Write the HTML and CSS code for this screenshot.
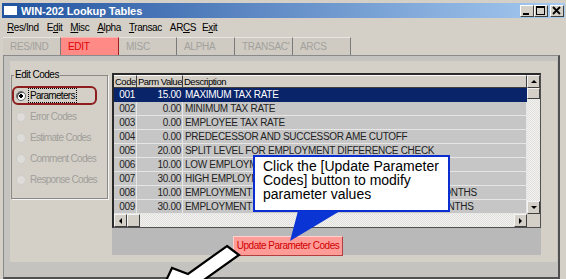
FILE: index.html
```html
<!DOCTYPE html>
<html lang="en">
<head>
    <meta charset="UTF-8">
    <title>WIN-202 Lookup Tables</title>
    <link rel="stylesheet" href="styles.css">
</head>
<body>
<div class="win">
    <!-- title bar -->
    <div class="titlebar">
        <span class="ticon"></span>
        <span class="ttext">WIN-202 Lookup Tables</span>
        <div class="tbtns">
            <span class="tb"><svg width="12" height="10" viewBox="0 0 12 10"><rect x="2" y="7" width="6" height="2" fill="#000"/></svg></span>
            <span class="tb"><svg width="12" height="10" viewBox="0 0 12 10"><rect x="1.5" y="0.5" width="8" height="8" fill="none" stroke="#000"/><rect x="1" y="0" width="9" height="2" fill="#000"/></svg></span>
            <span class="tb close"><svg width="12" height="10" viewBox="0 0 12 10"><path d="M2 1 L9 8 M9 1 L2 8" stroke="#000" stroke-width="1.8"/></svg></span>
        </div>
    </div>

    <!-- menu -->
    <div class="menubar">
        <span><u>R</u>es/Ind</span>
        <span>E<u>d</u>it</span>
        <span><u>M</u>isc</span>
        <span><u>A</u>lpha</span>
        <span><u>T</u>ransac</span>
        <span class="arcs">AR<u>C</u>S</span>
        <span>E<u>x</u>it</span>
    </div>

    <!-- tabs -->
    <div class="tabs">
        <div class="tab">RES/IND</div>
        <div class="tab active">EDIT</div>
        <div class="tab">MISC</div>
        <div class="tab">ALPHA</div>
        <div class="tab">TRANSAC'</div>
        <div class="tab">ARCS</div>
    </div>

    <div class="page">
        <div class="pane">
            <fieldset class="group">
                <legend>Edit Codes</legend>
                <div class="opt checked"><span class="radio"></span><span class="lbl focus">Parameters</span><span class="hl"></span></div>
                <div class="opt"><span class="radio"></span><span class="lbl">Error Codes</span></div>
                <div class="opt"><span class="radio"></span><span class="lbl">Estimate Codes</span></div>
                <div class="opt"><span class="radio"></span><span class="lbl">Comment Codes</span></div>
                <div class="opt"><span class="radio"></span><span class="lbl">Response Codes</span></div>
            </fieldset>

            <div class="gridarea">
                <div class="grid">
                    <div class="rows">
                        <div class="row head"><span>Code</span><span>Parm Value</span><span>Description</span></div>
                        <div class="row sel"><span>001</span><span>15.00</span><span>MAXIMUM TAX RATE</span></div>
                        <div class="row"><span>002</span><span>0.00</span><span>MINIMUM TAX RATE</span></div>
                        <div class="row"><span>003</span><span>0.00</span><span>EMPLOYEE TAX RATE</span></div>
                        <div class="row"><span>004</span><span>0.00</span><span>PREDECESSOR AND SUCCESSOR AME CUTOFF</span></div>
                        <div class="row"><span>005</span><span>20.00</span><span>SPLIT LEVEL FOR EMPLOYMENT DIFFERENCE CHECK</span></div>
                        <div class="row"><span>006</span><span>10.00</span><span>LOW EMPLOYMENT LEVEL PERCENT</span></div>
                        <div class="row"><span>007</span><span>30.00</span><span>HIGH EMPLOYMENT LEVEL PERCENT</span></div>
                        <div class="row"><span>008</span><span>10.00</span><span>EMPLOYMENT FOR SEASONAL VARIANCES CHECK IN MONTHS</span></div>
                        <div class="row"><span>009</span><span>30.00</span><span>EMPLOYMENT FOR SEASONAL VARIANCE PERIOD IN MONTHS</span></div>
                    </div>
                    <div class="vscroll">
                        <span class="sb up"></span>
                        <span class="thumb"></span>
                        <span class="track"></span>
                        <span class="sb down"></span>
                    </div>
                    <div class="hscroll">
                        <span class="sb left"></span>
                        <span class="thumb"></span>
                        <span class="track"></span>
                        <span class="sb right"></span>
                    </div>
                    <div class="corner"></div>
                </div>
                <div class="btnrow">
                    <button type="button">Update Parameter Codes</button>
                </div>
            </div>
        </div>
    </div>

    <!-- annotation overlays -->
    <div class="callout">Click the [Update Parameter Codes] button to modify parameter values</div>
    <svg class="tail" width="60" height="32" viewBox="0 0 60 32">
        <polygon points="10,0 52,0 2,30" fill="#0a35d4"/>
    </svg>
    <svg class="arrow" width="110" height="60" viewBox="150 240 110 60">
        <polygon points="227,246 239,255 201,282 209,292 156,302 172,268 188,274" fill="#fff" stroke="#000" stroke-width="2.2" stroke-linejoin="miter"/>
    </svg>
</div>
</body>
</html>
```

FILE: styles.css
```css
body {
    margin: 0;
    font-family: "Liberation Sans", Arial, sans-serif;
}
.win {
    position: relative;
    width: 566px;
    height: 279px;
    overflow: hidden;
    background: #d4d0c8;
}

/* title bar */
.titlebar {
    display: flex;
    align-items: center;
    height: 15px;
    margin: 3px 1px 0 2px;
    background: linear-gradient(to right, #22539f, #a6caf0);
    color: #fff;
}
.ticon {
    width: 13px;
    height: 9px;
    margin-left: 2px;
    background: #fff;
}
.ttext {
    margin-left: 4px;
    font-size: 11px;
    font-weight: bold;
    letter-spacing: -0.1px;
}
.tbtns {
    display: flex;
    margin-left: auto;
    margin-right: 1px;
}
.tb {
    display: flex;
    align-items: center;
    justify-content: center;
    width: 12px;
    height: 10px;
    background: #d4d0c8;
    border-top: 1px solid #fff;
    border-left: 1px solid #fff;
    border-right: 1px solid #404040;
    border-bottom: 1px solid #404040;
}
.tb.close {
    margin-left: 2px;
}

/* menu */
.menubar {
    display: flex;
    align-items: center;
    height: 18px;
    padding-left: 7px;
    font-size: 10px;
    letter-spacing: -0.4px;
    color: #000;
}
.menubar span {
    margin-right: 8px;
}
.menubar .arcs {
    margin-right: 6px;
}

/* tabs */
.tabs {
    display: flex;
    height: 18px;
    margin-top: 1px;
    padding-left: 3px;
}
.tab {
    box-sizing: border-box;
    width: 58px;
    padding-left: 7px;
    line-height: 18px;
    font-size: 10px;
    letter-spacing: -0.3px;
    color: #a3a19c;
    background: #cfcbc3;
    border-top: 1px solid #e8e6e2;
    border-right: 1px solid #7a7a7a;
}
.tab.active {
    background: #ff8a86;
    color: #e00000;
    border-right: 1px solid #a02020;
    border-top: 1px solid #ffb0b0;
}

/* tab page */
.page {
    box-sizing: border-box;
    width: 557px;
    height: 224px;
    margin-left: 3px;
    padding: 5px 1px 0 6px;
    background: #c5c3bf;
    border-top: 1px solid #8a8a8a;
    border-left: 1px solid #8a8a8a;
    border-right: 2px solid #505050;
    border-bottom: 2px solid #505050;
}
.pane {
    display: flex;
    height: 201px;
    box-sizing: border-box;
    padding-top: 12px;
    background: #d4d0c8;
}

/* group box */
.group {
    box-sizing: border-box;
    width: 97px;
    height: 130px;
    margin: -4px 4px 0 1px;
    padding: 4px 0 0 0;
    border: 1px solid #8c8a86;
    box-shadow: 1px 1px 0 #f4f4f4;
    font-size: 10px;
    letter-spacing: -0.7px;
}
.group legend {
    padding: 0 1px;
    margin-left: 2px;
    line-height: 12px;
    letter-spacing: -0.5px;
    color: #000;
}
.opt {
    position: relative;
    display: flex;
    align-items: center;
    height: 21px;
    padding-left: 4px;
    white-space: nowrap;
    color: #a09e9a;
}
.opt.checked {
    color: #000;
}
.radio {
    box-sizing: border-box;
    flex: none;
    width: 10px;
    height: 10px;
    margin-right: 3px;
    border-radius: 50%;
    background: #dedcd8;
    border: 1px solid #cfcdc8;
}
.checked .radio {
    background: radial-gradient(circle, #000 0 1.6px, #fff 2px);
    border: 1px solid #6a6a6a;
    box-shadow: inset 1px 1px 0 #404040;
}
.lbl {
    padding: 0 1px;
    line-height: 13px;
}
.lbl.focus {
    outline: 1px dotted #000;
}
.hl {
    position: absolute;
    left: 0;
    top: 1px;
    width: 81px;
    height: 15px;
    border: 2px solid #8e1d1d;
    border-radius: 6px;
}

/* grid */
.gridarea {
    width: 429px;
    height: 182px;
    background: #b9b9b9;
}
.grid {
    box-sizing: border-box;
    display: grid;
    grid-template-columns: 1fr 13px;
    grid-template-rows: 1fr 13px;
    height: 155px;
    border-top: 2px solid #2a2a2a;
    border-left: 2px solid #2a2a2a;
    border-right: 1px solid #505050;
    border-bottom: 1px solid #505050;
    font-size: 10px;
    letter-spacing: -0.3px;
}
.rows {
    overflow: hidden;
    background: #c6c6c6;
}
.row {
    display: grid;
    grid-template-columns: 23px 46px 1fr;
    height: 14px;
    color: #222;
}
.row span {
    box-sizing: border-box;
    padding: 0 1px 0 2px;
    line-height: 13px;
    white-space: nowrap;
    overflow: hidden;
    border-right: 1px solid #e6e6e6;
    border-bottom: 1px solid #e6e6e6;
}
.row span:nth-child(1),
.row span:nth-child(2) {
    text-align: right;
}
.row.head {
    height: 13px;
    background: #d4d0c8;
    color: #000;
    font-size: 9.5px;
    letter-spacing: -0.5px;
}
.row.head span {
    line-height: 11px;
    text-align: left;
    padding-left: 1px;
    padding-right: 0;
    border-right: 1px solid #404040;
    border-bottom: 1px solid #404040;
    border-top: 1px solid #fff;
}
.row.sel {
    background: #0a246a;
    color: #fff;
}
.row.sel span {
    border-color: #0a246a;
}

.vscroll,
.hscroll {
    display: flex;
    background: repeating-conic-gradient(#f2f2f0 0 25%, #e2e0dc 0 50%) 0 0 / 2px 2px;
}
.vscroll {
    flex-direction: column;
}
.track {
    flex: 1;
}
.sb,
.thumb,
.corner {
    box-sizing: border-box;
    display: flex;
    align-items: center;
    justify-content: center;
    width: 13px;
    height: 13px;
    background: #d4d0c8;
    border-top: 1px solid #f4f4f4;
    border-left: 1px solid #f4f4f4;
    border-right: 1px solid #404040;
    border-bottom: 1px solid #404040;
}
.vscroll .thumb { height: 11px; }
.corner {
    border: none;
}
.sb::after {
    content: "";
    border: 3px solid transparent;
}
.sb.up::after { border-bottom: 3px solid #000; margin-top: -3px; }
.sb.down::after { border-top: 3px solid #000; margin-bottom: -3px; }
.sb.left::after { border-right: 3px solid #000; margin-left: -3px; }
.sb.right::after { border-left: 3px solid #000; margin-right: -3px; }

.btnrow {
    padding: 7px 0 0 121px;
}
.btnrow button {
    box-sizing: border-box;
    width: 110px;
    height: 20px;
    padding: 0;
    white-space: nowrap;
    font-family: "Liberation Sans", Arial, sans-serif;
    font-size: 10px;
    letter-spacing: -0.5px;
    color: #d00000;
    background: #ff9c98;
    border-top: 1px solid #ffd0d0;
    border-left: 1px solid #ffd0d0;
    border-right: 1px solid #b04040;
    border-bottom: 1px solid #b04040;
}

/* annotation overlays */
.callout {
    position: absolute;
    left: 253px;
    top: 155px;
    box-sizing: border-box;
    width: 197px;
    height: 57px;
    padding: 2px 4px 0 8px;
    background: #fff;
    border: 2px solid #0a2ed0;
    font-size: 14px;
    line-height: 14px;
    color: #000;
}
.tail {
    position: absolute;
    left: 288px;
    top: 211px;
}
.arrow {
    position: absolute;
    left: 150px;
    top: 240px;
}
```
